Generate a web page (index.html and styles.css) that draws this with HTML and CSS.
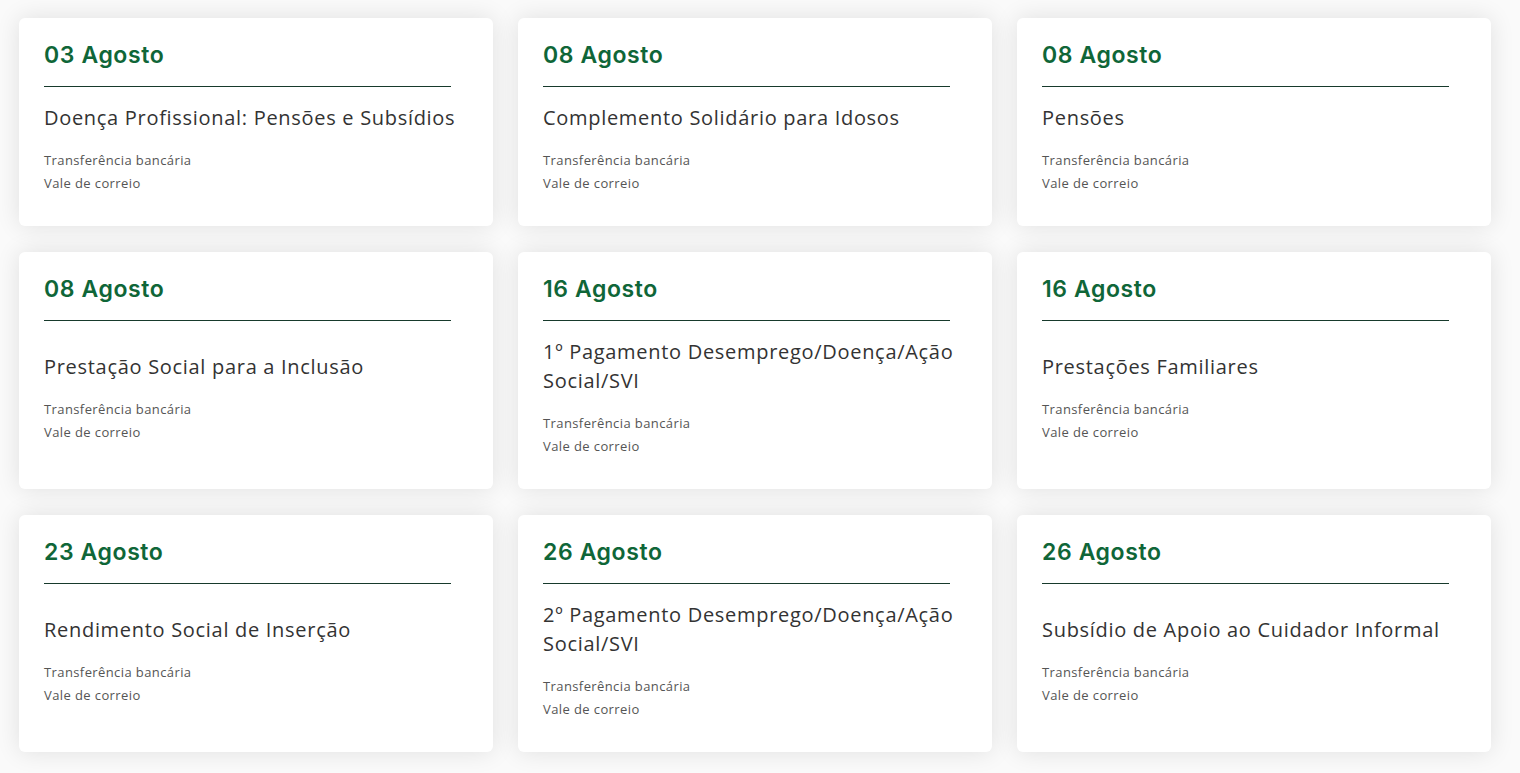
FILE: index.html
```html
<!DOCTYPE html>
<html lang="pt">
<head>
<meta charset="utf-8">
<link rel="stylesheet" href="styles.css">
</head>
<body>
<div class="grid">
  <div class="card">
    <div class="date">03 Agosto</div><div class="rule"></div>
    <div class="body"><div class="title">Doença Profissional: Pensões e Subsídios</div><div class="meta">Transferência bancária<br>Vale de correio</div></div>
  </div>
  <div class="card">
    <div class="date">08 Agosto</div><div class="rule"></div>
    <div class="body"><div class="title">Complemento Solidário para Idosos</div><div class="meta">Transferência bancária<br>Vale de correio</div></div>
  </div>
  <div class="card">
    <div class="date">08 Agosto</div><div class="rule"></div>
    <div class="body"><div class="title">Pensões</div><div class="meta">Transferência bancária<br>Vale de correio</div></div>
  </div>
  <div class="card">
    <div class="date">08 Agosto</div><div class="rule"></div>
    <div class="body"><div class="title">Prestação Social para a Inclusão</div><div class="meta">Transferência bancária<br>Vale de correio</div></div>
  </div>
  <div class="card">
    <div class="date">16 Agosto</div><div class="rule"></div>
    <div class="body"><div class="title">1º Pagamento Desemprego/Doença/Ação Social/SVI</div><div class="meta">Transferência bancária<br>Vale de correio</div></div>
  </div>
  <div class="card">
    <div class="date">16 Agosto</div><div class="rule"></div>
    <div class="body"><div class="title">Prestações Familiares</div><div class="meta">Transferência bancária<br>Vale de correio</div></div>
  </div>
  <div class="card">
    <div class="date">23 Agosto</div><div class="rule"></div>
    <div class="body"><div class="title">Rendimento Social de Inserção</div><div class="meta">Transferência bancária<br>Vale de correio</div></div>
  </div>
  <div class="card">
    <div class="date">26 Agosto</div><div class="rule"></div>
    <div class="body"><div class="title">2º Pagamento Desemprego/Doença/Ação Social/SVI</div><div class="meta">Transferência bancária<br>Vale de correio</div></div>
  </div>
  <div class="card">
    <div class="date">26 Agosto</div><div class="rule"></div>
    <div class="body"><div class="title">Subsídio de Apoio ao Cuidador Informal</div><div class="meta">Transferência bancária<br>Vale de correio</div></div>
  </div>
</div>
</body>
</html>
```

FILE: styles.css
```css
html, body {
  margin: 0;
  background: #fafafa;
}
body {
  padding: 18px 29px 20px 19px;
  font-family: "Open Sans", "Liberation Sans", sans-serif;
}
.grid {
  display: grid;
  grid-template-columns: repeat(3, 474px);
  column-gap: 25px;
  row-gap: 26px;
}
.card {
  background: #fff;
  border-radius: 6px;
  box-shadow: 0 0 24px rgba(0, 0, 0, 0.11);
  padding: 25px 25px 31px 25px;
  display: flex;
  flex-direction: column;
}
.date {
  font-family: Inter, "Open Sans", sans-serif;
  font-weight: 600;
  font-size: 23px;
  line-height: 25px;
  color: #0f6638;
  letter-spacing: 0.6px;
}
.rule {
  height: 1px;
  background: #173a2c;
  margin-top: 18px;
  width: 407px;
}
.body {
  flex: 1;
  padding-top: 16px;
  display: flex;
  flex-direction: column;
  justify-content: center;
}
.title {
  font-size: 20px;
  line-height: 29px;
  color: #333;
  font-weight: 500;
  letter-spacing: 0.7px;
}
.meta {
  margin-top: 17px;
  font-size: 13px;
  line-height: 23px;
  color: #555;
  letter-spacing: 0.4px;
}
```
